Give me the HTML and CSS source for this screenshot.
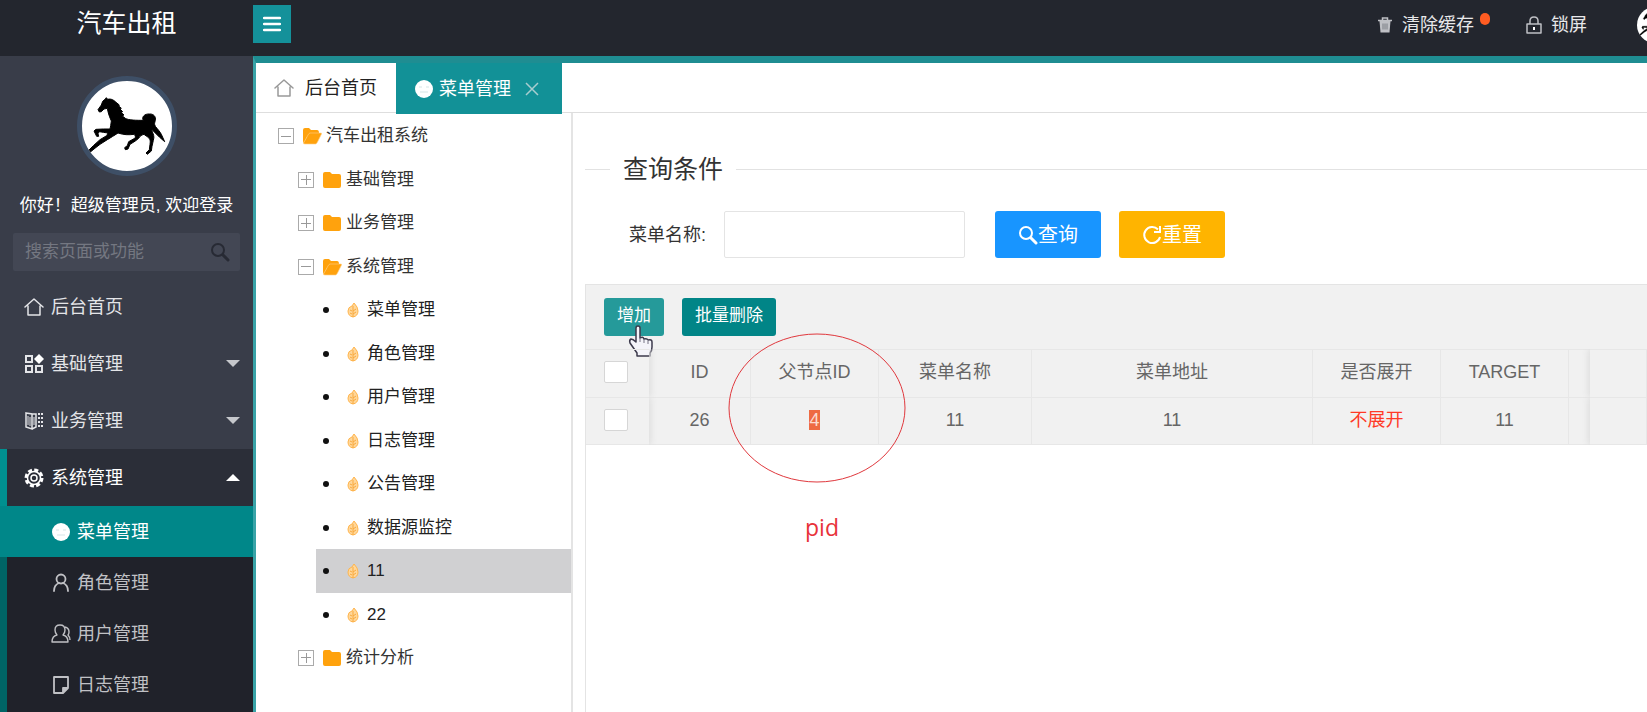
FILE: index.html
```html
<!DOCTYPE html>
<html lang="zh-CN">
<head>
<meta charset="utf-8">
<title>汽车出租</title>
<link rel="stylesheet" href="styles.css">
</head>
<body>
<svg class="defs" aria-hidden="true">
  <symbol id="home" viewBox="0 0 20 20"><path d="M1 10 10 2l9 8M4 9v9h12V9" fill="none" stroke="currentColor" stroke-width="1.5" stroke-linejoin="round" stroke-linecap="round"/></symbol>
  <symbol id="face" viewBox="0 0 20 20"><circle cx="10" cy="10" r="9" fill="#fff"/><path d="M5 8h3M12 8h3M6 13h8" stroke="#d5e5e6" stroke-width="1" fill="none"/></symbol>
  <symbol id="folder" viewBox="0 0 20 18"><path d="M1 3q0-2 2-2h5l2 2h7q2 0 2 2v10q0 2-2 2H3q-2 0-2-2z" fill="#ffa20d"/></symbol>
  <symbol id="folder-open" viewBox="0 0 20 18"><path d="M1 3q0-2 2-2h4l2 2h6q2 0 2 3v4H5l-3 6q-1 0-1-2z" fill="#ffa20d"/><path d="M6 8q1-2 2-2h11q1 0 .5 1l-4 8q-1 2-2 2H3q-2 0-1.500-1z" fill="#ffa20d" stroke="#ffd28a" stroke-width=".6"/></symbol>
  <symbol id="leaf" viewBox="0 0 12 16"><path d="M7 1q4 4 4 8 0 5-5 6-5-1-5-6 0-4 4-5z" fill="#ffd79a" stroke="#ffb54d"/><path d="M6 4v11M6 9l3-2M6 12l3-2M5 9 3 8M5 12l-2-1" stroke="#f9a93c" fill="none"/></symbol>
  <symbol id="search" viewBox="0 0 20 20"><circle cx="8" cy="8" r="6" fill="none" stroke="currentColor" stroke-width="2"/><path d="m13 13 5 5" stroke="currentColor" stroke-width="3" stroke-linecap="round"/></symbol>
  <symbol id="horse" viewBox="20 32 270 270"><path d="M68 118 78 104 82 93 90 86 93 82 97 87C108 84 116 90 122 96L132 104 130 107 138 114 134 116 142 124 137 126 146 134 140 136 150 144C160 150 185 150 204 150 198 140 208 130 222 131 236 130 242 140 240 150 238 158 236 160 240 168 248 178 254 184 258 192L268 214 252 200 240 188 228 176 230 182C234 192 238 198 234 210L230 228 228 242 216 252 212 248 222 238 224 222C226 210 224 204 214 198L206 192C200 194 194 196 190 204L180 212 164 222 158 236 150 238 148 232 156 226 160 214 178 204C182 200 180 196 176 192 160 194 146 194 128 188 116 196 106 202 96 208L74 222 56 236 44 246 38 242 54 226 74 208 94 196 98 188 84 186 72 184 68 190 70 198 64 198 56 182 62 177 84 176 104 176 106 166 108 152C104 142 100 134 98 124L96 114 86 116 78 124 72 125Z" stroke="#000" stroke-width="3" stroke-linejoin="round"/></symbol>
</svg>

<header class="header">
  <h1 class="logo">汽车出租</h1>
  <button class="toggle" type="button" aria-label="收起菜单"><svg viewBox="0 0 18 16"><path d="M1 2h16M1 8h16M1 14h16" stroke="#fff" stroke-width="2.500" stroke-linecap="round"/></svg></button>
  <nav class="actions">
    <a href="#" class="action"><svg class="act-icon" viewBox="0 0 16 16"><path d="M1 3.500h14M5.500 3V1h5v2" stroke="#bfc0c5" stroke-width="1.500" fill="none"/><path d="M2.500 4h11l-1 11.500h-9z" fill="#bfc0c5"/><path d="M6 6.500v6M8 6.500v6M10 6.500v6" stroke="#6a6c75" stroke-width=".8"/></svg>清除缓存<i class="dot"></i></a>
    <a href="#" class="action"><svg class="act-icon lock" viewBox="0 0 16 18"><path d="M1 8h14v9H1zM4 8V5q0-4 4-4t4 4v3" fill="none" stroke="#bfc0c5" stroke-width="1.500" stroke-linejoin="round"/><path d="M8 11v3" stroke="#fff" stroke-width="2"/></svg>锁屏</a>
    <a href="#" class="mini" aria-label="用户"><svg viewBox="0 0 36 36"><use href="#horse"/></svg></a>
  </nav>
</header>

<div class="layout">
  <aside class="sidebar">
    <div class="avatar"><svg viewBox="0 0 90 90"><use href="#horse"/></svg></div>
    <p class="hello">你好！超级管理员, 欢迎登录</p>
    <form class="finder"><input type="text" aria-label="搜索页面或功能" placeholder="搜索页面或功能"><button type="button" aria-label="搜索"><svg><use href="#search"/></svg></button></form>
    <nav class="menu">
      <a href="#" class="item"><svg class="icon"><use href="#home"/></svg>后台首页</a>
      <a href="#" class="item"><svg class="icon" viewBox="0 0 20 20"><path d="M2 2h6v6H2zM2 12h6v6H2zM12 12h6v6h-6z" fill="none" stroke="currentColor" stroke-width="2"/><path d="m15 0 5 5-5 5-5-5z" fill="#fff"/></svg>基础管理<i class="caret"></i></a>
      <a href="#" class="item"><svg class="icon" viewBox="0 0 20 20"><path d="M2 2l6 1v15l-6-2zM8 3h4v13l-4 2" fill="none" stroke="currentColor" stroke-width="1.500"/><path d="M4 5v9M6 6v9M10 6v8" stroke="currentColor"/><path d="M15 2v15M18 2v15" stroke="currentColor" stroke-width="2" stroke-dasharray="2 2"/></svg>业务管理<i class="caret"></i></a>
      <a href="#" class="item open"><svg class="icon" viewBox="0 0 20 20"><circle cx="10" cy="10" r="8" fill="none" stroke="currentColor" stroke-width="3" stroke-dasharray="4 2.283"/><circle cx="10" cy="10" r="6.500" fill="none" stroke="currentColor" stroke-width="1.500"/><circle cx="10" cy="10" r="3" fill="none" stroke="currentColor" stroke-width="1.500"/></svg>系统管理<i class="caret up"></i></a>
      <div class="sub">
        <a href="#" class="subitem active"><svg class="icon"><use href="#face"/></svg>菜单管理</a>
        <a href="#" class="subitem"><svg class="icon" viewBox="0 0 20 20"><circle cx="10" cy="6" r="4.500" fill="none" stroke="currentColor" stroke-width="1.800"/><path d="M3 18q0-6 5-8M17 18q0-6-5-8" fill="none" stroke="currentColor" stroke-width="1.800" stroke-linecap="round"/></svg>角色管理</a>
        <a href="#" class="subitem"><svg class="icon" viewBox="0 0 20 20"><path d="M6 11Q4 9 4 6q0-5 5-5t5 5q0 3-2 5 5 1 5 7H1q0-6 5-7zM14 3q4 1 4 5 0 2-1 3 2 2 2 5" fill="none" stroke="currentColor" stroke-width="1.400" stroke-linejoin="round"/></svg>用户管理</a>
        <a href="#" class="subitem"><svg class="icon" viewBox="0 0 20 20"><path d="M3 2h14v11l-5 5H3zM12 18v-5h5" fill="none" stroke="currentColor" stroke-width="1.800" stroke-linejoin="round"/><path d="M12 18v-5h5z" fill="currentColor"/></svg>日志管理</a>
      </div>
    </nav>
  </aside>

  <main class="main">
    <div class="tabs">
      <a href="#" class="tab"><svg class="icon"><use href="#home"/></svg>后台首页</a>
      <a href="#" class="tab current"><svg class="icon"><use href="#face"/></svg>菜单管理<svg class="close" viewBox="0 0 14 14"><path d="m1 1 12 12M13 1 1 13" stroke="#a8cdcf" stroke-width="1.500"/></svg></a>
    </div>
    <div class="panes">
      <div class="tree">
        <div class="node"><i class="box"></i><svg class="folder"><use href="#folder-open"/></svg>汽车出租系统</div>
        <div class="branch">
          <div class="node"><i class="box plus"></i><svg class="folder"><use href="#folder"/></svg>基础管理</div>
          <div class="node"><i class="box plus"></i><svg class="folder"><use href="#folder"/></svg>业务管理</div>
          <div class="node"><i class="box"></i><svg class="folder"><use href="#folder-open"/></svg>系统管理</div>
          <ul class="leaves">
            <li><svg><use href="#leaf"/></svg>菜单管理</li>
            <li><svg><use href="#leaf"/></svg>角色管理</li>
            <li><svg><use href="#leaf"/></svg>用户管理</li>
            <li><svg><use href="#leaf"/></svg>日志管理</li>
            <li><svg><use href="#leaf"/></svg>公告管理</li>
            <li><svg><use href="#leaf"/></svg>数据源监控</li>
            <li class="picked"><svg><use href="#leaf"/></svg>11</li>
            <li><svg><use href="#leaf"/></svg>22</li>
          </ul>
          <div class="node"><i class="box plus"></i><svg class="folder"><use href="#folder"/></svg>统计分析</div>
        </div>
      </div>

      <section class="content">
        <fieldset class="query">
          <legend>查询条件</legend>
          <div class="query-row">
            <label for="menu-name">菜单名称:</label>
            <input id="menu-name" type="text">
            <button type="button" class="btn blue"><svg><use href="#search"/></svg>查询</button>
            <button type="button" class="btn amber"><svg viewBox="0 0 20 20"><path d="M16 4.500A8 8 0 1 0 18 12M18 1v6h-6" fill="none" stroke="currentColor" stroke-width="2"/></svg>重置</button>
          </div>
        </fieldset>
        <div class="grid">
          <div class="toolbar">
            <button type="button" class="small hover">增加</button>
            <button type="button" class="small">批量删除</button>
            <svg class="pointer" viewBox="0 0 26 32"><path d="M8 3q0-2 2-2t2 2v10q3-2 4 1 3-1 4 1 4-1 4 2v5q0 4-2 6v3H9v-3L2 18q-1-3 1-4 2 0 5 3z" fill="#f4f4fa" stroke="#3c3a4c" stroke-width="1.500" stroke-linejoin="round"/><path d="M12 13v4M16 14v4M20 16v3" stroke="#777585"/></svg>
          </div>
          <table>
            <colgroup><col class="c-check"><col class="c-id"><col class="c-mid"><col class="c-name"><col><col class="c-mid"><col class="c-mid"><col class="c-gap"><col class="c-end"></colgroup>
            <thead><tr><th class="pin"><input type="checkbox" aria-label="全选"></th><th>ID</th><th>父节点ID</th><th>菜单名称</th><th>菜单地址</th><th>是否展开</th><th>TARGET</th><th class="gap"></th><th class="end"></th></tr></thead>
            <tbody><tr><td class="pin"><input type="checkbox" aria-label="选择 26"></td><td>26</td><td><mark>4</mark></td><td>11</td><td>11</td><td class="red">不展开</td><td>11</td><td class="gap"></td><td class="end"></td></tr></tbody>
          </table>
        </div>
        <svg class="ring" viewBox="0 0 178 150"><ellipse cx="89" cy="75" rx="88" ry="74" fill="none" stroke="#e0383d"/></svg>
        <span class="note">pid</span>
      </section>
    </div>
  </main>
</div>
</body>
</html>
```
FILE: styles.css
```css
* { box-sizing: border-box; }
body {
  margin: 0;
  height: 100vh;
  display: flex;
  flex-direction: column;
  overflow: hidden;
  background: #fff;
  color: #333;
  font: 18px/24px "Liberation Sans", "Noto Sans CJK SC", sans-serif;
}
a { color: inherit; text-decoration: none; }
button, input { font: inherit; margin: 0; padding: 0; }
button { border: 0; cursor: pointer; }
.defs { position: absolute; width: 0; height: 0; }
.icon { width: 20px; height: 20px; flex: none; }

.header { flex: none; display: flex; height: 56px; background: #23262e; color: #e8e8ea; overflow: hidden; }
.logo { width: 253px; margin: 0; text-align: center; font-size: 25px; line-height: 46px; font-weight: 400; color: #fff; }
.toggle { width: 38px; height: 38px; margin-top: 5px; display: grid; place-items: center; background: #14919a; }
.toggle svg { width: 18px; height: 16px; }
.actions { display: flex; align-items: center; height: 50px; margin-left: auto; margin-right: -26px; }
.action { position: relative; display: flex; align-items: center; gap: 9px; margin-right: 52px; }
.action + .action { margin-right: 50px; }
.act-icon { width: 16px; height: 16px; }
.lock { height: 18px; }
.dot { position: absolute; left: 103px; top: 0; width: 10px; height: 12px; border-radius: 5px; background: #ff5c22; }
.mini { width: 36px; height: 36px; border-radius: 50%; background: #fff; overflow: hidden; }
.mini svg { display: block; }

.layout { flex: 1; min-height: 0; display: flex; }
.sidebar { flex: none; display: flex; flex-direction: column; width: 253px; overflow: hidden; background: #393d49; color: #e4e5e8; }
.avatar { flex: none; width: 100px; height: 100px; margin: 20px auto 0; border: 5px solid #3e4f66; border-radius: 50%; background: #fff; overflow: hidden; }
.avatar svg { display: block; }
.hello { margin: 18px 0 15px; text-align: center; font-size: 17px; color: #fff; white-space: nowrap; }
.finder { flex: none; display: flex; align-items: center; margin: 0 13px 7px; height: 38px; padding: 0 10px 0 12px; border-radius: 2px; background: #434754; }
.finder input { flex: 1; min-width: 0; border: 0; background: none; font-size: 17px; color: #ddd; }
.finder input::placeholder { color: #747781; opacity: 1; }
.finder button { width: 20px; height: 20px; background: none; color: #272a34; }
.finder svg { display: block; width: 20px; height: 20px; }
.menu { flex: 1; display: flex; flex-direction: column; }
.item { flex: none; display: flex; align-items: center; gap: 7px; height: 57px; padding: 0 13px 0 17px; border-left: 7px solid transparent; }
.item.open { border-color: #009090; background: #2b2e38; color: #fff; }
.caret { margin-left: auto; border: 7px solid transparent; border-top-color: #c6c8cc; border-bottom-width: 0; }
.caret.up { border-width: 0 7px 7px; border-bottom-color: #fff; }
.sub { flex: 1; background: linear-gradient(90deg, #006465 7px, #20222a 7px); }
.subitem { display: flex; align-items: center; gap: 6px; height: 51px; padding-left: 51px; color: #c0c1c5; }
.subitem.active { background: #008789; color: #fff; }

.main { flex: 1; min-width: 0; display: flex; flex-direction: column; border-top: 7px solid #1f8d92; border-left: 3px solid #39a3a7; }
.tabs { flex: none; display: flex; height: 50px; border-bottom: 1px solid #dedede; }
.tab { display: flex; align-items: center; gap: 11px; height: 50px; padding: 0 19px 0 18px; color: #222; }
.tab .icon { color: #999; }
.tab.current { height: 51px; gap: 5px; padding-right: 23px; z-index: 1; background: #129197; color: #fff; }
.close { width: 14px; height: 14px; margin-left: 9px; }
.panes { flex: 1; min-height: 0; display: flex; }

.tree { flex: none; width: 317px; padding-top: 1px; overflow: hidden; border-right: 2px solid #e4e4e4; font-size: 17px; }
.node { display: flex; align-items: center; height: 44px; padding-left: 22px; }
.branch .node { height: 43px; padding-left: 42px; }
.branch .node:nth-child(2) { height: 44px; }
.box { flex: none; width: 16px; height: 16px; margin-right: 8px; border: 1px solid #aaa; background: linear-gradient(#999, #999) center / 10px 1px no-repeat; }
.plus { background: linear-gradient(#999, #999) center / 10px 1px no-repeat, linear-gradient(#999, #999) center / 1px 10px no-repeat; }
.folder { flex: none; width: 20px; height: 18px; margin-right: 4px; }
.leaves { list-style: none; margin: 0; padding: 0 0 0 60px; color: #222; }
.leaves li { display: flex; align-items: center; height: 43px; }
.leaves li:nth-child(odd) { height: 44px; }
.leaves li::before { content: ""; width: 6px; height: 6px; margin: 0 18px 0 7px; border-radius: 50%; background: #111; }
.leaves svg { width: 12px; height: 16px; margin-right: 8px; }
.leaves .picked { background: #d0d0d2; }

.content { position: relative; flex: 1; min-width: 0; display: flex; flex-direction: column; padding: 37px 0 0 12px; }
.query { flex: none; min-width: 0; margin: 0; padding: 0; border: 0; border-top: 1px solid #e2e2e2; }
.query legend { margin-left: 25px; padding: 0 13px; font-size: 25px; line-height: 38px; }
.query-row { display: flex; align-items: center; padding: 23px 0 26px 44px; }
.query-row label { width: 95px; }
.query-row input { width: 241px; height: 47px; margin-right: 30px; padding: 0 10px; border: 1px solid #e4e4e4; border-radius: 2px; }
.btn { display: flex; align-items: center; justify-content: center; width: 106px; height: 47px; margin-right: 18px; border-radius: 3px; color: #fff; font-size: 20px; }
.btn svg { width: 20px; height: 20px; }
.blue { background: #1895ff; }
.amber { background: #ffb400; }

.grid { flex: 1; border: 1px solid #e4e4e4; border-width: 1px 0 0 1px; }
.toolbar { position: relative; display: flex; gap: 18px; height: 64px; padding: 13px 18px; background: #f1f1f1; }
.small { height: 38px; padding: 0 13px 3px; border-radius: 3px; background: #018587; color: #fff; font-size: 17px; }
.hover { background: #259a9a; }
.pointer { position: absolute; left: 42px; top: 40px; width: 26px; height: 32px; }
table { width: 100%; table-layout: fixed; border-collapse: separate; border-spacing: 0; background: #f1f1f1; color: #666; }
.c-check { width: 63px; }
.c-id { width: 102px; }
.c-mid { width: 128px; }
.c-name { width: 153px; }
.c-gap { width: 21px; }
.c-end { width: 57px; }
th, td { height: 48px; padding: 0 0 3px; border: 1px solid #e7e7e7; border-width: 1px 1px 0 0; text-align: center; font-weight: 400; }
td { border-bottom-width: 1px; }
.pin { border-right: 0; box-shadow: 2px 0 6px #dedede; clip-path: inset(0 -10px 0 0); }
.gap { border-right: 0; }
.end { box-shadow: -2px 0 6px #dedede; clip-path: inset(0 0 0 -10px); }
th input, td input { appearance: none; display: block; width: 24px; height: 22px; margin-left: 18px; border: 1px solid #d6d6d6; border-radius: 2px; background: #fff; }
mark { background: #ee6b43; color: #fbdcd0; }
.red { color: #ff3a26; }
.ring { position: absolute; left: 155px; top: 220px; width: 178px; height: 150px; }
.note { position: absolute; left: 232px; top: 399px; color: #e8323a; font: 23px/30px "Open Sans", "Noto Sans", sans-serif; }
```
